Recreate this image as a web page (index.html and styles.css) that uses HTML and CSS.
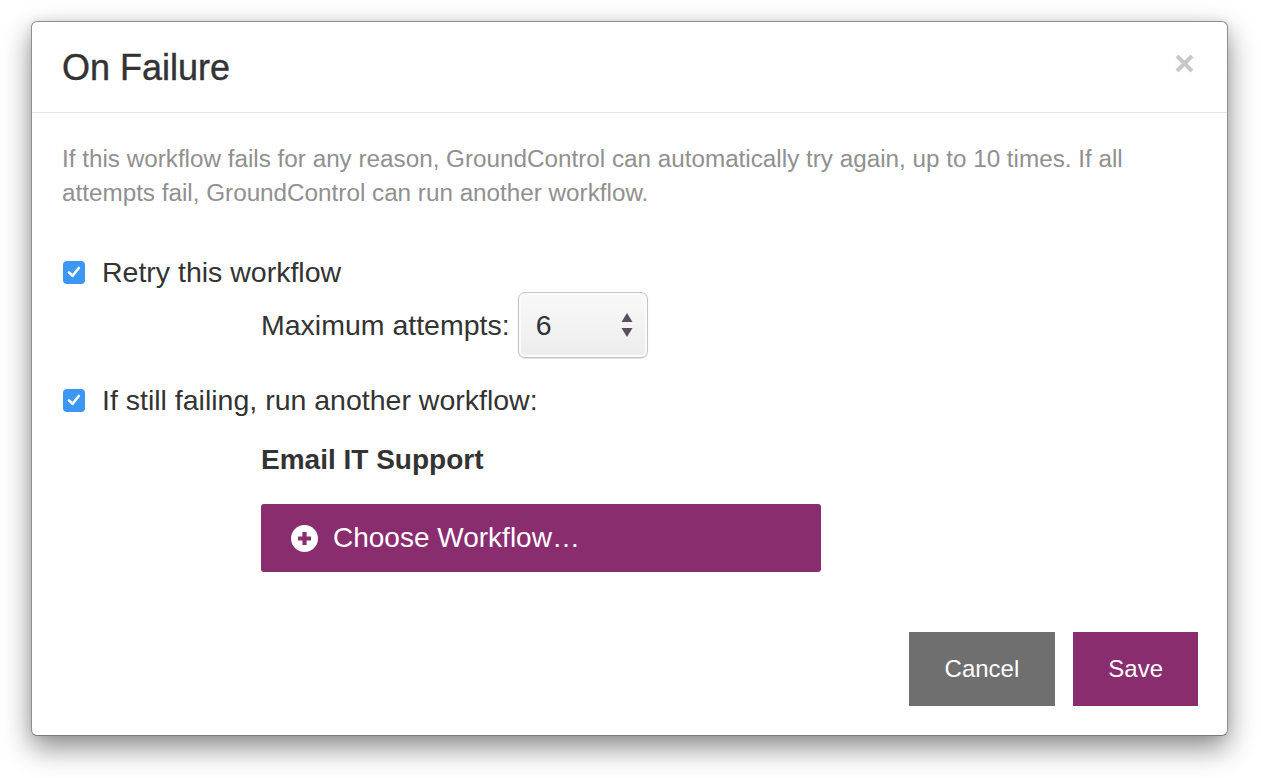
FILE: index.html
```html
<!DOCTYPE html>
<html lang="en">
<head>
  <meta charset="UTF-8">
  <meta name="viewport" content="width=device-width, initial-scale=1.0">
  <title>On Failure</title>
  <link rel="stylesheet" href="styles.css">
</head>
<body>
  <div class="modal">
    <div class="modal-header">
      <h1 class="modal-title">On Failure</h1>
      <button class="close" aria-label="Close">
        <svg width="19" height="19" viewBox="0 0 19 19">
          <path d="M2 2 L17 17 M17 2 L2 17" stroke="#c8c8c8" stroke-width="4" fill="none"/>
        </svg>
      </button>
    </div>

    <div class="modal-body">
      <p class="help">If this workflow fails for any reason, GroundControl can automatically try again, up to 10 times. If all attempts fail, GroundControl can run another workflow.</p>

      <label class="check-row retry-row">
        <span class="checkbox">
          <svg width="16" height="16" viewBox="0 0 16 16">
            <path d="M3 8.5 L6.6 11.8 L12.8 4" stroke="#fff" stroke-width="2.6" fill="none" stroke-linecap="round" stroke-linejoin="round"/>
          </svg>
        </span>
        Retry this workflow
      </label>

      <div class="indent attempts-row">
        <span>Maximum attempts:</span>
        <div class="select-box">
          <span>6</span>
          <svg class="arrows" width="12" height="26" viewBox="0 0 12 26">
            <path d="M6 1 L11.5 10 L0.5 10 Z" fill="#5a4f5e"/>
            <path d="M0.5 16 L11.5 16 L6 25 Z" fill="#5a4f5e"/>
          </svg>
        </div>
      </div>

      <label class="check-row fallback-row">
        <span class="checkbox">
          <svg width="16" height="16" viewBox="0 0 16 16">
            <path d="M3 8.5 L6.6 11.8 L12.8 4" stroke="#fff" stroke-width="2.6" fill="none" stroke-linecap="round" stroke-linejoin="round"/>
          </svg>
        </span>
        If still failing, run another workflow:
      </label>

      <div class="indent chosen">Email IT Support</div>

      <div class="indent">
        <button class="choose-btn">
          <svg width="27" height="27" viewBox="0 0 27 27">
            <circle cx="13.5" cy="13.5" r="13.5" fill="#fff"/>
            <path d="M13.5 7 V20 M7 13.5 H20" stroke="#8a2d6e" stroke-width="4.2"/>
          </svg>
          Choose Workflow…
        </button>
      </div>
    </div>

    <div class="modal-footer">
      <button class="btn btn-cancel">Cancel</button>
      <button class="btn btn-save">Save</button>
    </div>
  </div>
</body>
</html>
```

FILE: styles.css
```css
html, body {
  height: 100%;
}
body {
  margin: 0;
  box-sizing: border-box;
  padding: 21px 0 0 31px;
  background: #fff;
  font-family: "Liberation Sans", Arial, sans-serif;
  color: #333;
}
.modal {
  width: 1197px;
  height: 715px;
  box-sizing: border-box;
  background: #fff;
  border: 1px solid #8e8e8e;
  border-bottom-color: #7c7c7c;
  border-radius: 6px;
  box-shadow: 0 12px 28px rgba(0, 0, 0, 0.45), 0 0 10px rgba(0, 0, 0, 0.08);
  display: flex;
  flex-direction: column;
}
.modal-header {
  position: relative;
  height: 91px;
  box-sizing: border-box;
  padding: 0 30px;
  border-bottom: 1px solid #e5e5e5;
  display: flex;
  align-items: center;
}
.modal-title {
  margin: 0;
  font-size: 36px;
  font-weight: normal;
  -webkit-text-stroke: 0.4px #333;
  color: #333;
  line-height: 40px;
  padding-top: 2px;
}
.close {
  position: absolute;
  top: 32px;
  right: 33px;
  padding: 0;
  border: none;
  background: none;
  line-height: 0;
  cursor: pointer;
}
.modal-body {
  padding: 29px 30px 0;
  font-size: 28.5px;
}
.help {
  margin: 0;
  font-size: 24.25px;
  line-height: 34px;
  color: #909090;
}
.check-row {
  display: flex;
  align-items: center;
  height: 40px;
}
.retry-row {
  margin-top: 42px;
}
.fallback-row {
  margin-top: 22px;
}
.checkbox {
  width: 22px;
  height: 23px;
  margin: 0 17px 0 1px;
  border-radius: 4px;
  background: #3b97f3;
  display: flex;
  align-items: center;
  justify-content: center;
}
.indent {
  margin-left: 199px;
}
.attempts-row {
  display: flex;
  align-items: center;
  gap: 8px;
}
.select-box {
  width: 130px;
  height: 66px;
  box-sizing: border-box;
  border: 1px solid #c4c4c4;
  border-radius: 7px;
  background: linear-gradient(#f9f9f9, #ececec);
  box-shadow: inset 0 0 0 2px #fbfbfb, 0 1px 1px rgba(0, 0, 0, 0.12);
  display: flex;
  align-items: center;
  justify-content: space-between;
  padding: 0 14px 0 17px;
  color: #333;
}
.chosen {
  margin-top: 20px;
  font-weight: bold;
  font-size: 28px;
  line-height: 40px;
}
.choose-btn {
  margin-top: 24px;
  width: 560px;
  height: 68px;
  border: none;
  border-radius: 3px;
  background: #8a2d6e;
  color: #fff;
  font-family: inherit;
  font-size: 28px;
  display: flex;
  align-items: center;
  gap: 15px;
  padding: 0 0 0 30px;
  cursor: pointer;
}
.modal-footer {
  margin-top: auto;
  padding: 0 29px 29px;
  display: flex;
  justify-content: flex-end;
  gap: 18px;
}
.btn {
  height: 74px;
  border: none;
  border-radius: 0;
  color: #fff;
  font-family: inherit;
  font-size: 24px;
  padding: 0 36px;
  cursor: pointer;
}
.btn-cancel {
  background: #6f6f6f;
}
.btn-save {
  background: #8a2d6e;
  padding: 0 35px;
}
```
